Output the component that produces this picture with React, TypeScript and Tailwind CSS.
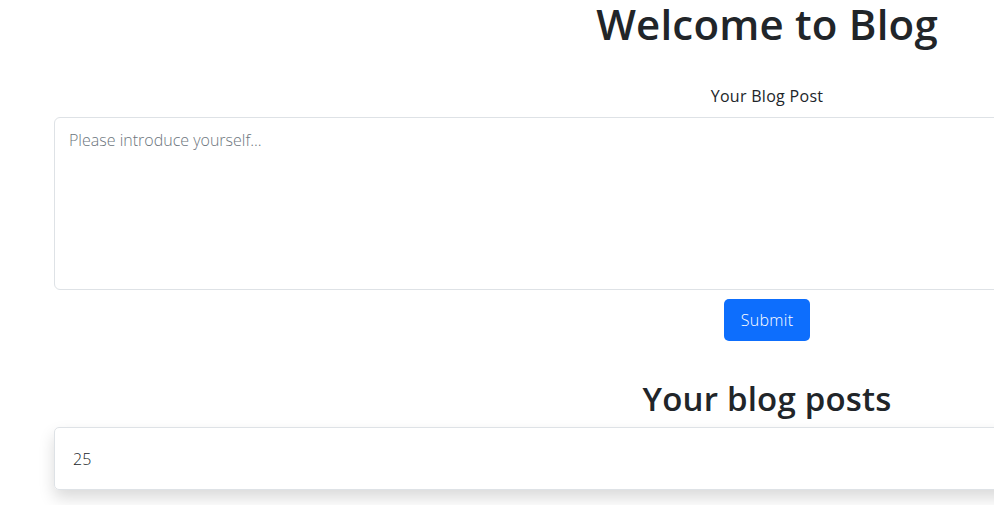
import React from 'react'

const App = () => {
  return (
    <div className="min-h-screen bg-white overflow-hidden text-[#212529]" style={{ fontFamily: '"Open Sans", "Noto Sans", sans-serif' }}>
      <div className="w-[1426px] ml-[54px] flex flex-col items-center">
        <h1 className="text-[42px] leading-[48px] font-semibold tracking-[0.2px] mb-[36px]">Welcome to Blog</h1>

        <label htmlFor="post" className="text-[16px] leading-[24px] tracking-[0.3px] mb-[9px]">Your Blog Post</label>
        <textarea
          id="post"
          placeholder="Please introduce yourself..."
          className="w-full h-[173px] border border-[#dee2e6] rounded-[6px] px-[14px] py-[10px] text-[16px] leading-[24px] font-light placeholder:text-[#6c757d] resize-none outline-none"
        />

        <button className="mt-[9px] h-[42px] w-[86px] rounded-[5px] bg-[#0d6efd] text-white text-[16px] font-light tracking-[0.3px]">
          Submit
        </button>

        <h2 className="mt-[39px] text-[33px] leading-[38px] font-semibold tracking-[0.2px] mb-[9px]">Your blog posts</h2>

        <div className="w-full h-[63px] border border-[#dee2e6] rounded-[5px] shadow-[0_8px_16px_rgba(0,0,0,0.15)] flex items-center px-[18px]">
          <span className="text-[16px] leading-[24px] font-light text-[#212529]">25</span>
        </div>
      </div>
    </div>
  )
}

export default App
